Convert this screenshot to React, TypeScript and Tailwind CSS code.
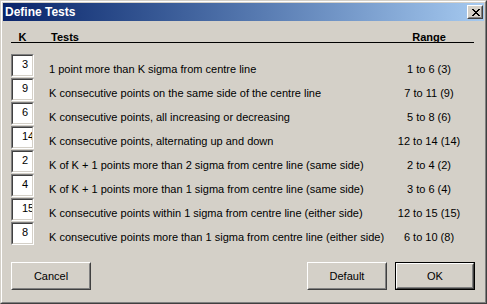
const TESTS = [
  { k: '3', text: '1 point more than K sigma from centre line', range: '1 to 6 (3)' },
  { k: '9', text: 'K consecutive points on the same side of the centre line', range: '7 to 11 (9)' },
  { k: '6', text: 'K consecutive points, all increasing or decreasing', range: '5 to 8 (6)' },
  { k: '14', text: 'K consecutive points, alternating up and down', range: '12 to 14 (14)' },
  { k: '2', text: 'K of K + 1 points more than 2 sigma from centre line (same side)', range: '2 to 4 (2)' },
  { k: '4', text: 'K of K + 1 points more than 1 sigma from centre line (same side)', range: '3 to 6 (4)' },
  { k: '15', text: 'K consecutive points within 1 sigma from centre line (either side)', range: '12 to 15 (15)' },
  { k: '8', text: 'K consecutive points more than 1 sigma from centre line (either side)', range: '6 to 10 (8)' },
];

// classic 3d bevel, raised
const Raised = ({ children }: { children: React.ReactNode }) => (
  <div className="flex-1 flex border border-t-white border-l-white border-r-[#404040] border-b-[#404040]">
    <div className="flex-1 flex items-center justify-center border border-t-[#d4d0c8] border-l-[#d4d0c8] border-r-[#808080] border-b-[#808080]">
      {children}
    </div>
  </div>
);

const Button = ({ label, isDefault = false }: { label: string; isDefault?: boolean }) => (
  <button
    type="button"
    className={isDefault ? 'w-[80px] h-[28px] flex border border-black' : 'w-[80px] h-[28px] flex'}
  >
    <Raised>{label}</Raised>
  </button>
);

const CloseGlyph = () => {
  // 8x7 pixel cross, like the old window manager glyph
  const rows = ['11000011', '01100110', '00111100', '00011000', '00111100', '01100110', '11000011'];
  return (
    <svg width="8" height="7" viewBox="0 0 8 7" shapeRendering="crispEdges">
      {rows.flatMap((r, y) =>
        r.split('').map((c, x) => (c === '1' ? <rect key={`${x}-${y}`} x={x} y={y} width="1" height="1" fill="#000" /> : null))
      )}
    </svg>
  );
};

const KInput = ({ value }: { value: string }) => (
  <div className="w-[23px] h-[23px] flex border border-t-[#808080] border-l-[#808080] border-r-white border-b-white">
    <div className="flex-1 overflow-hidden bg-white border border-t-[#404040] border-l-[#404040] border-r-[#d4d0c8] border-b-[#d4d0c8]">
      <div className="pl-[9px] pt-[2px] leading-[13px] whitespace-nowrap">{value}</div>
    </div>
  </div>
);

export default function App() {
  return (
    <div className="w-[487px] h-[304px] flex text-black text-[11px] font-['Liberation_Sans',Arial,sans-serif] border border-t-[#d4d0c8] border-l-[#d4d0c8] border-r-[#404040] border-b-[#404040]">
      <div className="flex-1 flex border border-t-white border-l-white border-r-[#808080] border-b-[#808080]">
        <div className="flex-1 flex flex-col p-px bg-[#d4d0c8]">
          {/* title bar */}
          <div className="h-[18px] flex items-center justify-between pl-[2px] pr-[1px] bg-linear-to-r from-[#0a246a] to-[#a6caf0]">
            <span className="text-white font-bold text-[12px] leading-[14px]">Define Tests</span>
            <div className="w-[16px] h-[14px] flex bg-[#d4d0c8]">
              <Raised>
                <span className="pl-px pt-px flex">
                  <CloseGlyph />
                </span>
              </Raised>
            </div>
          </div>

          <div className="flex-1 flex flex-col pl-[8px] pr-[9px]">
            <div className="flex pt-[11px] leading-[10px] font-bold border-b border-black mr-px">
              <div className="w-[23px] text-center">K</div>
              <div className="ml-[17px] flex-1">Tests</div>
              <div className="w-[80px] text-center mr-[5px]">Range</div>
            </div>

            <div className="flex flex-col mt-[11px]">
              {TESTS.map((t) => (
                <div key={t.text} className="flex items-start h-[24px]">
                  <KInput value={t.k} />
                  <div className="ml-[15px] flex-1 pt-[9px] leading-[13px] whitespace-nowrap">{t.text}</div>
                  <div className="w-[80px] mr-[6px] pt-[9px] leading-[13px] text-center whitespace-nowrap">{t.range}</div>
                </div>
              ))}
            </div>

            <div className="flex mt-[16px]">
              <Button label="Cancel" />
              <div className="flex-1" />
              <Button label="Default" />
              <div className="ml-[8px] flex">
                <Button label="OK" isDefault />
              </div>
            </div>
          </div>
        </div>
      </div>
    </div>
  );
}
